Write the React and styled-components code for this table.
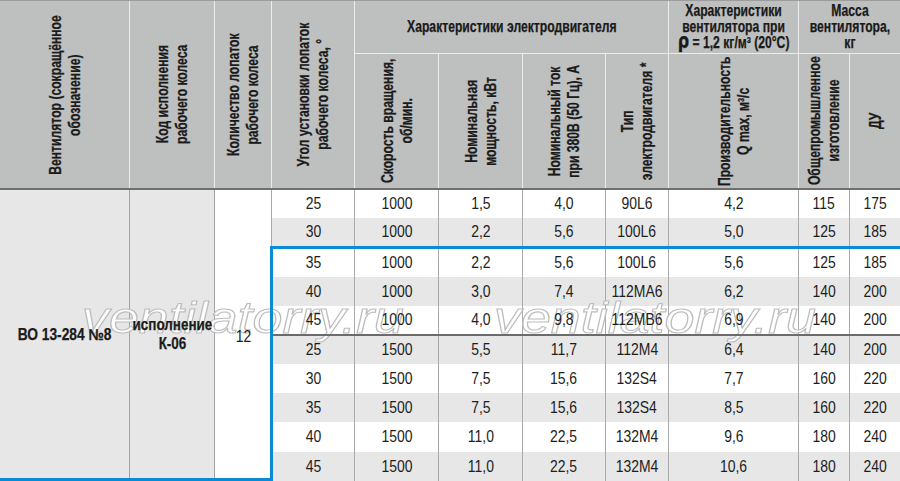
import React from 'react';
import styled, { createGlobalStyle } from 'styled-components';

const GlobalStyle = createGlobalStyle`
  html, body { margin: 0; padding: 0; background: #fff; }
  body {
    font-family: "Liberation Sans", Arial, sans-serif;
    color: #1c1c1c;
  }
`;

const BLUE = '#0a8bd8';
const HEAD_BG = '#bebfbf';
const SHADE = '#e6e7e6';
const COLS = '129px 84px 56px 82px 83px 83px 82px 62px 129px 50px 50px';
const DATA_COLS = '82px 83px 83px 82px 62px 129px 50px 50px';

const Page = styled.div`
  position: relative;
  isolation: isolate;
  width: 900px;
  height: 481px;
  overflow: hidden;
`;

const Header = styled.div`
  display: grid;
  grid-template-columns: ${COLS};
  grid-template-rows: 52px 134px;
  gap: 1px;
  background: #ececec;
  border-top: 1px solid #9c9c9c;
  border-bottom: 2px solid #6f6f6f;
`;

const HeadCell = styled.div`
  grid-column: ${(p) => p.$col};
  grid-row: ${(p) => p.$row};
  background: ${HEAD_BG};
  display: flex;
  align-items: center;
  justify-content: center;
  font-weight: 700;
  font-size: 16px;
  text-align: center;
  overflow: hidden;
  color: #1a1a1a;
  -webkit-text-stroke: 0.25px #1a1a1a;
`;

const GroupTitle = styled.div`
  line-height: 16px;
  white-space: nowrap;
  transform: scaleX(0.76);
`;

const Rho = styled.span`
  font-size: 21px;
  font-family: "DejaVu Sans", sans-serif;
  font-weight: 700;
  line-height: 0;
`;

const VText = styled.div`
  writing-mode: vertical-rl;
  transform: rotate(180deg) scaleY(0.76);
  white-space: nowrap;
  text-align: center;
  line-height: 19px;
`;

const Body = styled.div`
  display: flex;
  height: 291px;
`;

const LeftBlock = styled.div`
  box-sizing: border-box;
  width: 271px;
  display: grid;
  grid-template-columns: 129px 84px 56px;
  column-gap: 1px;
  background: #a2a2a2;
  border-bottom: 3px solid ${BLUE};
`;

const MergedCell = styled.div`
  background: ${(p) => (p.$white ? '#fff' : SHADE)};
  display: flex;
  align-items: center;
  justify-content: center;
  text-align: center;
  font-size: ${(p) => (p.$bold ? 16 : 17)}px;
  font-weight: ${(p) => (p.$bold ? 700 : 400)};
  line-height: 19px;
  padding-top: ${(p) => (p.$bold ? 0 : 4)}px;
  -webkit-text-stroke: ${(p) => (p.$bold ? '0.25px #1a1a1a' : '0')};
`;

const Condensed = styled.span`
  position: relative;
  z-index: 2;
  display: inline-block;
  white-space: nowrap;
  transform: scaleX(${(p) => p.$k || 0.82});
`;

const RightBlock = styled.div`
  width: 629px;
  display: flex;
  flex-direction: column;
`;

const Highlight = styled.div`
  position: relative;
  border-top: 3px solid ${BLUE};
  &::before {
    content: '';
    position: absolute;
    z-index: 3;
    left: -1px;
    top: -3px;
    bottom: 0;
    width: 3px;
    background: ${BLUE};
  }
`;

const GroupDivider = styled.div`
  position: relative;
  z-index: 2;
  height: 2px;
  background: #6b6b6b;
`;

const DataRow = styled.div`
  display: grid;
  grid-template-columns: ${DATA_COLS};
  column-gap: 1px;
  padding-left: 1px;
  background: #a9a9a9;
  height: ${(p) => p.$h}px;
`;

const DataCell = styled.div`
  background: ${(p) => (p.$shade ? SHADE : '#fff')};
  display: flex;
  align-items: center;
  justify-content: center;
  font-size: 17px;
  color: #1e1e1e;
`;

const Watermark = styled.svg`
  position: absolute;
  z-index: 1;
  left: 0;
  top: 0;
  width: 900px;
  height: 481px;
  pointer-events: none;
`;

const rows = [
  [25, 1000, '1,5', '4,0', '90L6', '4,2', 115, 175],
  [30, 1000, '2,2', '5,6', '100L6', '5,0', 125, 185],
  [35, 1000, '2,2', '5,6', '100L6', '5,6', 125, 185],
  [40, 1000, '3,0', '7,4', '112MA6', '6,2', 140, 200],
  [45, 1000, '4,0', '9,8', '112MB6', '6,9', 140, 200],
  [25, 1500, '5,5', '11,7', '112M4', '6,4', 140, 200],
  [30, 1500, '7,5', '15,6', '132S4', '7,7', 160, 220],
  [35, 1500, '7,5', '15,6', '132S4', '8,5', 160, 220],
  [40, 1500, '11,0', '22,5', '132M4', '9,6', 180, 240],
  [45, 1500, '11,0', '22,5', '132M4', '10,6', 180, 240],
];
const heights = [28, 28, 28, 29, 28, 28, 29, 29, 30, 29];

function Row({ i }) {
  return (
    <DataRow $h={heights[i]}>
      {rows[i].map((v, k) => (
        <DataCell key={k} $shade={i % 2 === 1}>
          <Condensed>{v}</Condensed>
        </DataCell>
      ))}
    </DataRow>
  );
}

export default function App() {
  return (
    <>
      <GlobalStyle />
      <Page>
        <Header>
          <HeadCell $col="1" $row="1 / span 2">
            <VText>Вентилятор (сокращённое<br />обозначение)</VText>
          </HeadCell>
          <HeadCell $col="2" $row="1 / span 2">
            <VText>Код исполнения<br />рабочего колеса</VText>
          </HeadCell>
          <HeadCell $col="3" $row="1 / span 2">
            <VText>Количество лопаток<br />рабочего колеса</VText>
          </HeadCell>
          <HeadCell $col="4" $row="1 / span 2">
            <VText>Угол установки лопаток<br />рабочего колеса, °</VText>
          </HeadCell>
          <HeadCell $col="5 / span 4" $row="1">
            <GroupTitle>Характеристики электродвигателя</GroupTitle>
          </HeadCell>
          <HeadCell $col="9" $row="1">
            <GroupTitle>
              Характеристики<br />вентилятора при<br />
              <Rho>ρ</Rho> = 1,2 кг/м³ (20°C)
            </GroupTitle>
          </HeadCell>
          <HeadCell $col="10 / span 2" $row="1">
            <GroupTitle>Масса<br />вентилятора,<br />кг</GroupTitle>
          </HeadCell>
          <HeadCell $col="5" $row="2">
            <VText>Скорость вращения,<br />об/мин.</VText>
          </HeadCell>
          <HeadCell $col="6" $row="2">
            <VText>Номинальная<br />мощность, кВт</VText>
          </HeadCell>
          <HeadCell $col="7" $row="2">
            <VText>Номинальный ток<br />при 380В (50 Гц), А</VText>
          </HeadCell>
          <HeadCell $col="8" $row="2">
            <VText>Тип<br />электродвигателя *</VText>
          </HeadCell>
          <HeadCell $col="9" $row="2">
            <VText>Производительность<br />Q max, м³/с</VText>
          </HeadCell>
          <HeadCell $col="10" $row="2">
            <VText>Общепромышленное<br />изготовление</VText>
          </HeadCell>
          <HeadCell $col="11" $row="2">
            <VText>ДУ</VText>
          </HeadCell>
        </Header>

        <Body>
          <LeftBlock>
            <MergedCell $bold>
              <Condensed $k={0.86}>ВО 13-284 №8</Condensed>
            </MergedCell>
            <MergedCell $bold>
              <Condensed $k={0.84}>исполнение<br />К-06</Condensed>
            </MergedCell>
            <MergedCell $white>
              <Condensed>12</Condensed>
            </MergedCell>
          </LeftBlock>
          <RightBlock>
            <Row i={0} />
            <Row i={1} />
            <Highlight>
              <Row i={2} />
              <Row i={3} />
              <Row i={4} />
              <GroupDivider />
              <Row i={5} />
              <Row i={6} />
              <Row i={7} />
              <Row i={8} />
              <Row i={9} />
            </Highlight>
          </RightBlock>
        </Body>

        <Watermark viewBox="0 0 900 481">
          <g
            fontFamily='"Liberation Sans", Arial, sans-serif'
            fontStyle="italic"
            fontSize="45"
            fill="#ffffff"
            fillOpacity="0.85"
            stroke="#bdbdbd"
            strokeWidth="1.1"
          >
            <text x="82" y="333" textLength="322" lengthAdjust="spacingAndGlyphs">ventilatorry.ru</text>
            <text x="494" y="333" textLength="322" lengthAdjust="spacingAndGlyphs">ventilatorry.ru</text>
          </g>
        </Watermark>
      </Page>
    </>
  );
}
